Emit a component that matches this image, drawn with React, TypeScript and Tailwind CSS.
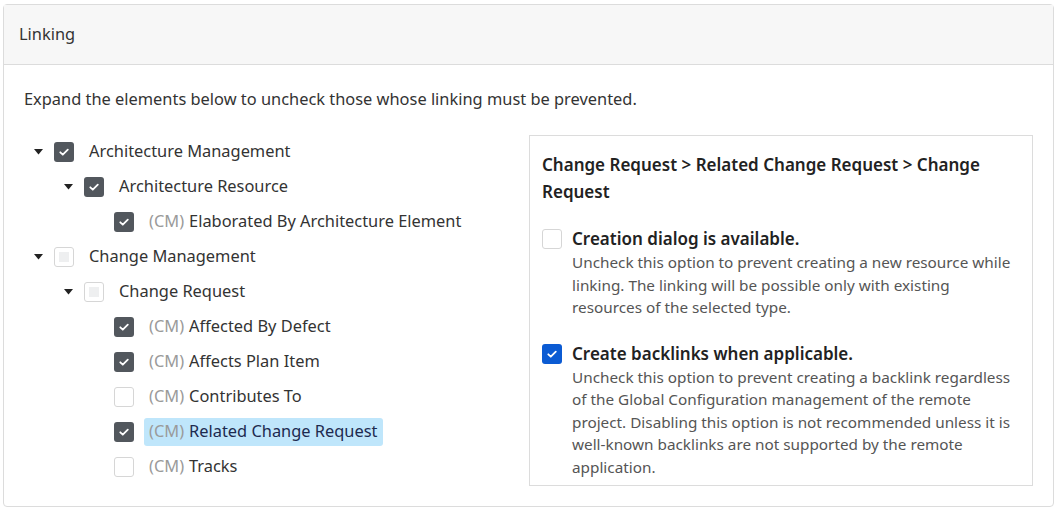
import { ReactNode } from 'react';

type Node = {
  label: string;
  prefix?: boolean;
  state: 'checked' | 'empty' | 'partial';
  level: number;
  caret?: boolean;
  selected?: boolean;
};

const nodes: Node[] = [
  { label: 'Architecture Management', state: 'checked', level: 0, caret: true },
  { label: 'Architecture Resource', state: 'checked', level: 1, caret: true },
  { label: 'Elaborated By Architecture Element', prefix: true, state: 'checked', level: 2 },
  { label: 'Change Management', state: 'partial', level: 0, caret: true },
  { label: 'Change Request', state: 'partial', level: 1, caret: true },
  { label: 'Affected By Defect', prefix: true, state: 'checked', level: 2 },
  { label: 'Affects Plan Item', prefix: true, state: 'checked', level: 2 },
  { label: 'Contributes To', prefix: true, state: 'empty', level: 2 },
  { label: 'Related Change Request', prefix: true, state: 'checked', level: 2, selected: true },
  { label: 'Tracks', prefix: true, state: 'empty', level: 2 },
];

function Check({ state, blue }: { state: Node['state']; blue?: boolean }) {
  if (state === 'checked') {
    return (
      <span
        className={`flex h-5 w-5 items-center justify-center rounded-[3px] ${
          blue ? 'bg-[#0b5bd3]' : 'bg-[#52575d]'
        }`}
      >
        <svg width="12" height="12" viewBox="0 0 12 12" fill="none">
          <path d="M2.3 6.3l2.5 2.4 5-5" stroke="white" strokeWidth="1.8" strokeLinecap="round" strokeLinejoin="round" />
        </svg>
      </span>
    );
  }
  return (
    <span className="flex h-5 w-5 items-center justify-center rounded-[3px] border border-[#d6d6d6] bg-white">
      {state === 'partial' && <span className="h-[10px] w-[10px] bg-[#eeeff0]" />}
    </span>
  );
}

function Caret({ show }: { show?: boolean }) {
  return (
    <span className="flex w-[9px]">
      {show && (
        <svg width="9" height="6" viewBox="0 0 9 6">
          <path d="M0 0h9L4.5 5.5z" fill="#222" />
        </svg>
      )}
    </span>
  );
}

function Row({ node }: { node: Node }) {
  return (
    <div className="flex h-[35px] items-center" style={{ paddingLeft: node.level * 30 }}>
      <Caret show={node.caret} />
      <span className="ml-[11px]">
        <Check state={node.state} />
      </span>
      <span
        className={`ml-[10px] flex h-[28px] items-center rounded-[3px] px-[5px] ${
          node.selected ? 'bg-[#bfe6fb] text-[#1d2a4f]' : 'text-[#333]'
        }`}
      >
        {node.prefix && <span className="mr-[5px] text-[#9a9a9a]">(CM)</span>}
        {node.label}
      </span>
    </div>
  );
}

function Option({ checked, title, children }: { checked?: boolean; title: string; children: ReactNode }) {
  return (
    <div className="flex gap-[10px]">
      <span className="mt-[2px] shrink-0">
        <Check state={checked ? 'checked' : 'empty'} blue />
      </span>
      <div>
        <div className="text-[17px] font-semibold leading-6 text-[#222]">{title}</div>
        <p className="text-[15.3px] leading-[22.5px] text-[#555]">{children}</p>
      </div>
    </div>
  );
}

export default function App() {
  return (
    <div className="bg-white p-[3px] pt-[4px] font-['Noto_Sans',sans-serif] text-[16.4px] text-[#333]">
      <div className="rounded-[4px] border border-[#dcdcdc]">
        <div className="flex h-[60px] items-center border-b border-[#dcdcdc] bg-[#f7f7f7] px-[15px] text-[#333]">
          Linking
        </div>
        <div className="px-[20px] pb-[20px] pt-[22px]">
          <p className="leading-6 text-[#333]">
            Expand the elements below to uncheck those whose linking must be prevented.
          </p>
          <div className="mt-[21px] flex">
            <div className="mt-[2px] w-[505px] pl-[10px]">
              {nodes.map((n) => (
                <Row key={n.label} node={n} />
              ))}
            </div>
            <div className="mt-[3px] w-[504px] self-start border border-[#dcdcdc] pb-[7px] pl-[12px] pr-[20px] pt-[15px]">
              <h3 className="text-[17px] font-semibold leading-[27px] text-[#222]">
                Change Request &gt; Related Change Request &gt; Change Request
              </h3>
              <div className="mt-[22px] flex flex-col gap-[23px]">
                <Option title="Creation dialog is available.">
                  Uncheck this option to prevent creating a new resource while linking. The linking will be
                  possible only with existing resources of the selected type.
                </Option>
                <Option checked title="Create backlinks when applicable.">
                  Uncheck this option to prevent creating a backlink regardless of the Global Configuration
                  management of the remote project. Disabling this option is not recommended unless it is
                  well-known backlinks are not supported by the remote application.
                </Option>
              </div>
            </div>
          </div>
        </div>
      </div>
    </div>
  );
}
